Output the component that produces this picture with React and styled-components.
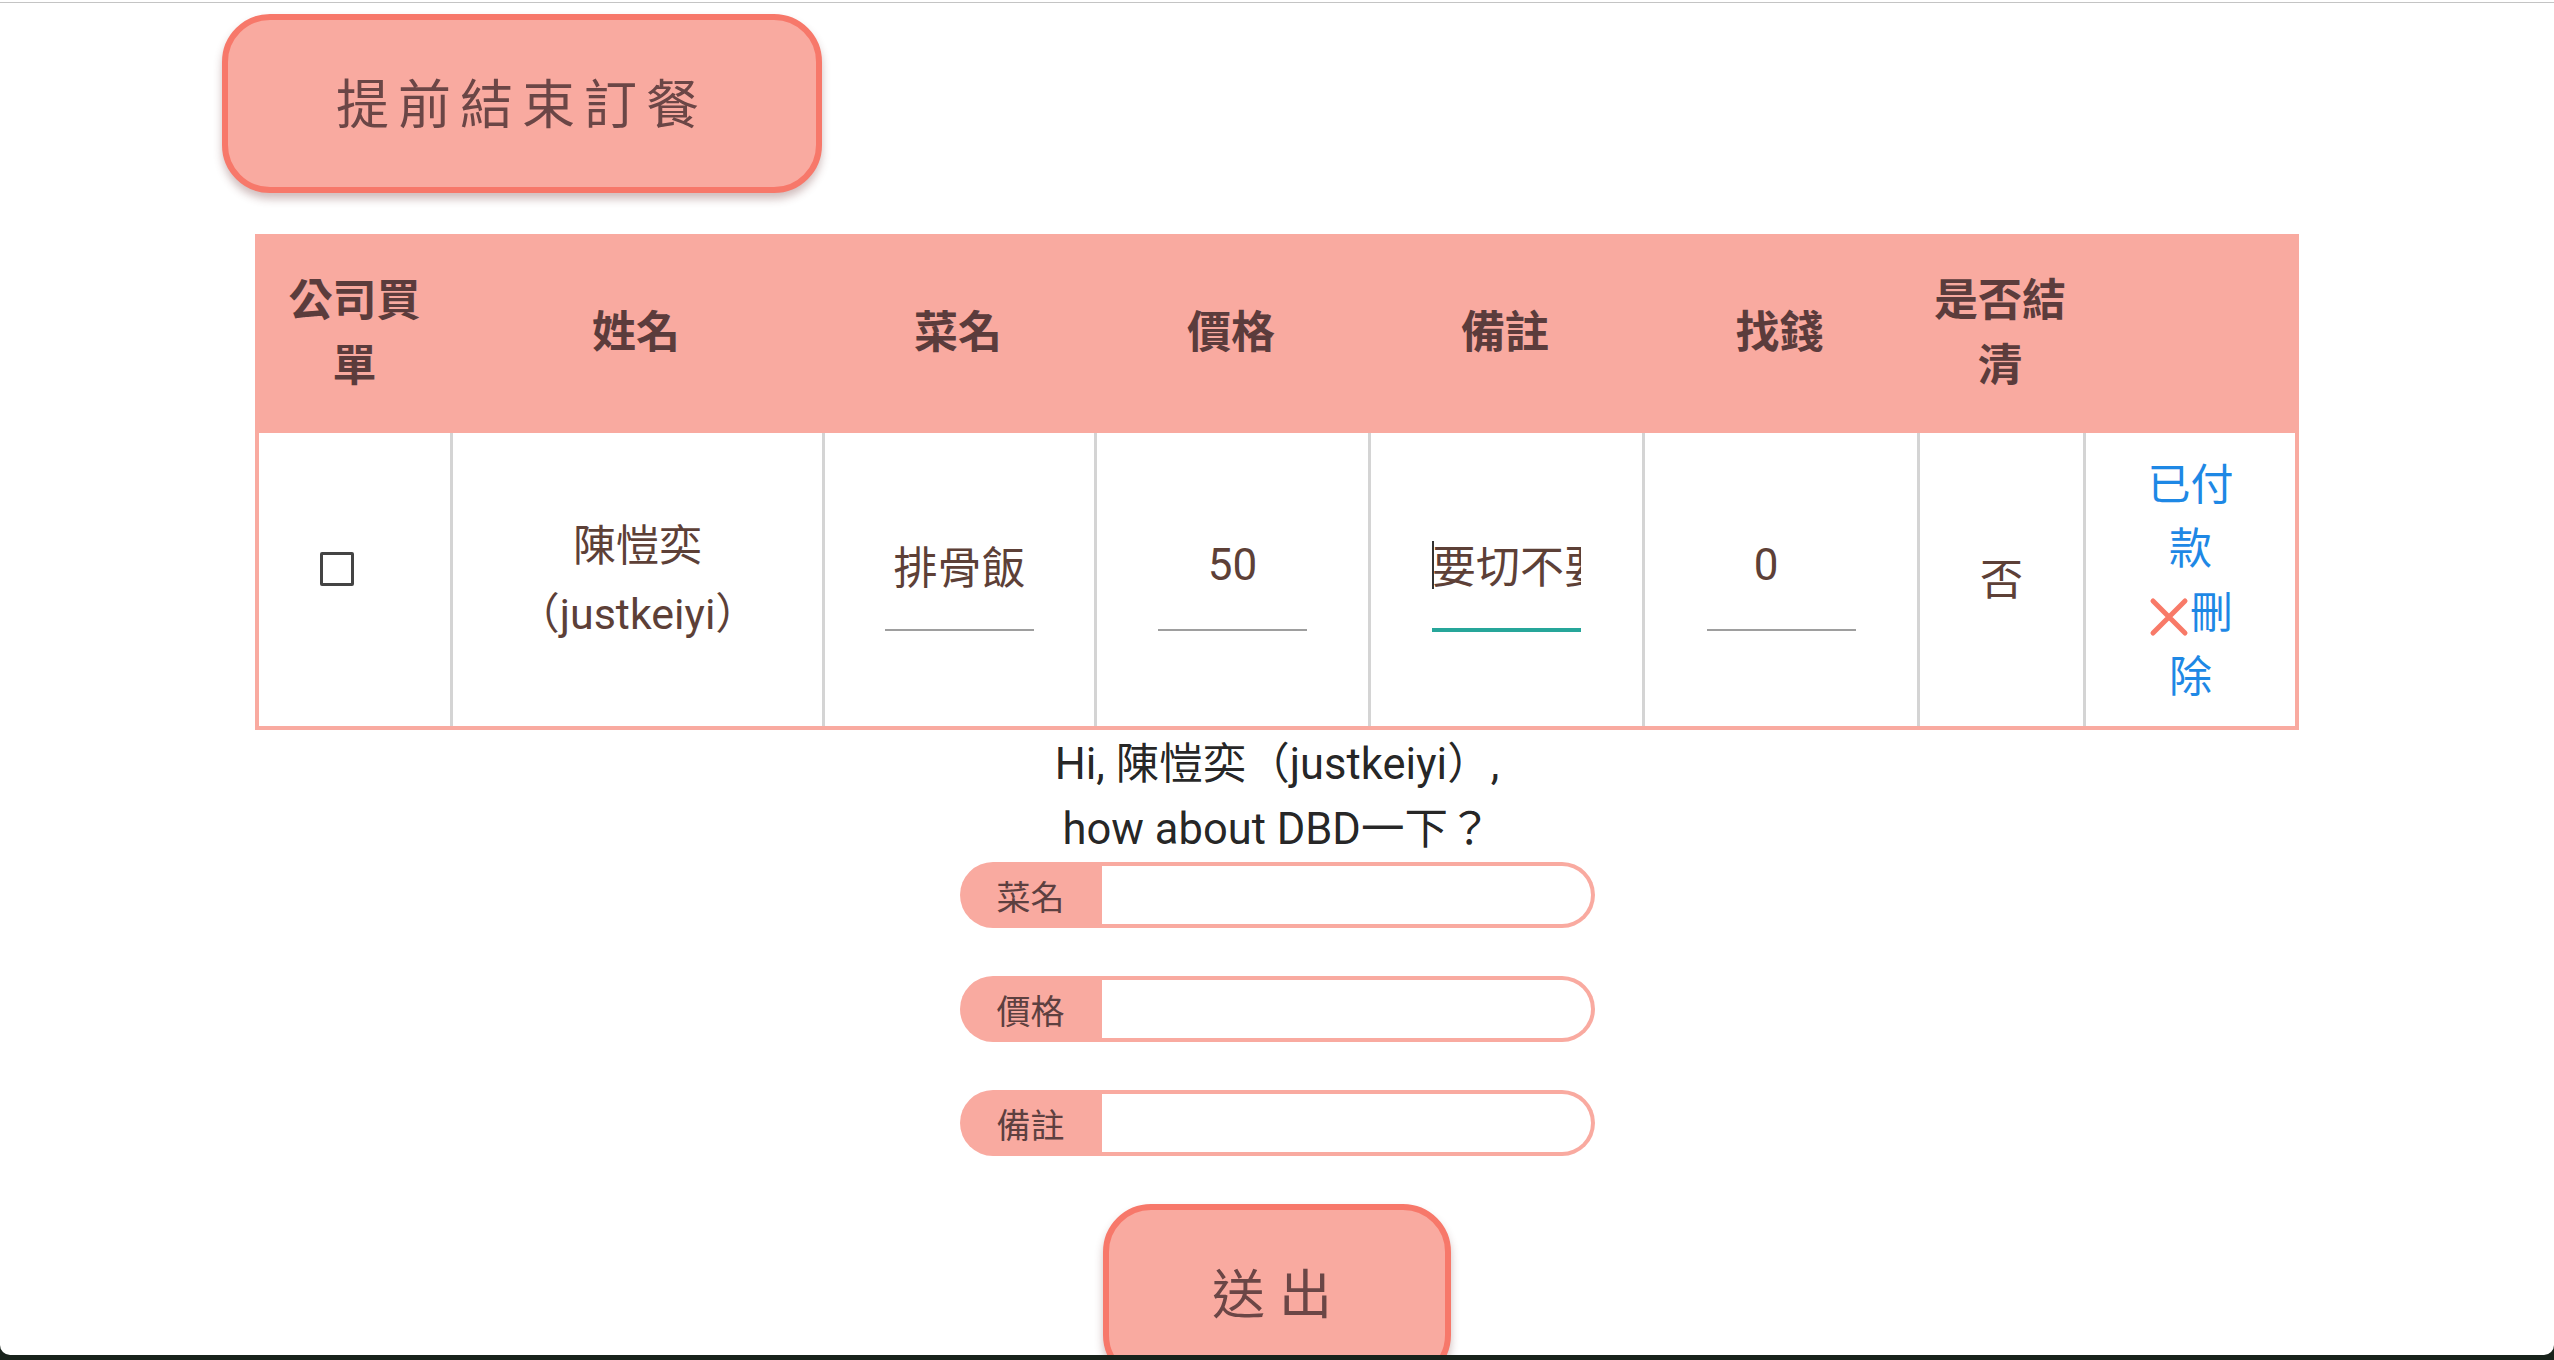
import React from 'react';
import styled, { createGlobalStyle } from 'styled-components';

const Global = createGlobalStyle`
  html, body { margin: 0; padding: 0; }
  body {
    background: #18221b;
    font-family: Roboto, "Noto Sans CJK TC", sans-serif;
  }
  * { box-sizing: border-box; }
`;

const PINK = '#f9aaa0';
const CORAL = '#f7786a';

const Frame = styled.div`
  width: 2554px;
  height: 1355px;
  background: #fff;
  overflow: hidden;
  border-radius: 0 0 10px 10px;
  display: flex;
  flex-direction: column;
`;

const TopRule = styled.div`
  flex-shrink: 0;
  height: 1px;
  margin-top: 2px;
  background: #c4c4c4;
`;

const TopBar = styled.div`
  display: flex;
  padding: 11px 0 0 222px;
`;

const PillButton = styled.button`
  flex-shrink: 0;
  width: ${(p) => p.$w}px;
  height: 179px;
  border: 6px solid ${CORAL};
  border-radius: 48px;
  background: ${PINK};
  color: #6b4646;
  font-family: "Noto Sans CJK TC", sans-serif;
  font-size: 53px;
  font-weight: 400;
  letter-spacing: ${(p) => p.$ls}px;
  padding: 0 0 6px ${(p) => p.$pl}px;
  box-shadow: 0 6px 8px rgba(110, 50, 50, 0.32);
  cursor: pointer;
`;

const Table = styled.div`
  width: 2044px;
  margin: 41px auto 0;
  border: 4px solid ${PINK};
  display: grid;
  grid-template-columns: 191px 372px 272px 274px 274px 275px 166px 212px;
  grid-template-rows: 195px 293px;
`;

const HeadCell = styled.div`
  background: ${PINK};
  display: flex;
  align-items: center;
  justify-content: center;
  text-align: center;
  padding-bottom: 12px;
  font-family: "Noto Sans CJK TC", sans-serif;
  font-weight: 700;
  font-size: 44px;
  line-height: 65px;
  color: #5b3c3c;
`;

const BodyCell = styled.div`
  display: flex;
  align-items: center;
  justify-content: center;
  text-align: center;
  border-left: ${(p) => (p.$first ? 'none' : '3px solid #d4d4d4')};
  font-size: 43px;
  line-height: 68px;
  color: #5d4037;
`;

const CheckBox = styled.span`
  display: block;
  width: 34px;
  height: 34px;
  border: 3px solid #444;
  border-radius: 2px;
  margin: 0 36px 22px 0;
`;

const FieldWrap = styled.div`
  position: relative;
  margin-top: 4px;
`;

const UnderInput = styled.input`
  display: block;
  box-sizing: content-box;
  width: ${(p) => 149 - (p.$spin || 0)}px;
  height: 64px;
  padding: 0 ${(p) => p.$spin || 0}px 32px 0;
  margin: 0;
  border: none;
  border-bottom: ${(p) => (p.$focused ? '4px solid #26a69a' : '2px solid #9e9e9e')};
  background: transparent;
  outline: none;
  text-align: ${(p) => (p.$focused ? 'left' : 'center')};
  font-family: Roboto, "Noto Sans CJK TC", sans-serif;
  font-size: 44px;
  color: #5d4037;
`;

const Caret = styled.span`
  position: absolute;
  left: 0;
  top: 9px;
  width: 2px;
  height: 48px;
  background: #333;
`;

const Actions = styled.div`
  width: 104px;
  margin-top: -6px;
  text-align: center;
  font-family: "Noto Sans CJK TC", sans-serif;
  font-size: 43px;
  line-height: 64px;
  color: #1e88e5;
`;

const ActionLink = styled.a`
  display: block;
  color: inherit;
  text-decoration: none;
  cursor: pointer;
`;

const XMark = styled.svg`
  width: 42px;
  height: 42px;
  vertical-align: -10px;
`;

const Greeting = styled.div`
  margin-top: 2px;
  text-align: center;
  font-size: 43.5px;
  line-height: 65px;
  color: rgba(0, 0, 0, 0.87);
`;

const Form = styled.form`
  display: flex;
  flex-direction: column;
  align-items: center;
  gap: 48px;
`;

const FormRow = styled.div`
  display: flex;
  width: 635px;
  height: 66px;
`;

const FormLabel = styled.label`
  flex-shrink: 0;
  width: 142px;
  display: flex;
  align-items: center;
  justify-content: center;
  background: ${PINK};
  border-radius: 33px 0 0 33px;
  font-family: "Noto Sans CJK TC", sans-serif;
  font-size: 34px;
  color: #5d4040;
`;

const FormInput = styled.input`
  flex: 1;
  min-width: 0;
  height: 66px;
  margin: 0;
  padding: 0 24px;
  border: 4px solid ${PINK};
  border-left: none;
  border-radius: 0 33px 33px 0;
  background: #fff;
  outline: none;
  font-size: 34px;
`;

const SubmitRow = styled.div`
  display: flex;
  justify-content: center;
  margin-top: 48px;
`;

const headers = [
  <>公司買<br />單</>,
  '姓名',
  '菜名',
  '價格',
  '備註',
  '找錢',
  <>是否結<br />清</>,
  '',
];

export default function App() {
  return (
    <>
      <Global />
      <Frame>
        <TopRule />
        <TopBar>
          <PillButton $w={600} $ls={9} $pl={0}>提前結束訂餐</PillButton>
        </TopBar>

        <Table>
          {headers.map((h, i) => (
            <HeadCell key={i}>{h}</HeadCell>
          ))}

          <BodyCell $first>
            <CheckBox />
          </BodyCell>
          <BodyCell>
            <span>陳愷奕<br />（justkeiyi）</span>
          </BodyCell>
          <BodyCell>
            <FieldWrap>
              <UnderInput readOnly value="排骨飯" />
            </FieldWrap>
          </BodyCell>
          <BodyCell>
            <FieldWrap>
              <UnderInput readOnly value="50" />
            </FieldWrap>
          </BodyCell>
          <BodyCell>
            <FieldWrap>
              <UnderInput readOnly $focused value="要切不要辣" />
              <Caret />
            </FieldWrap>
          </BodyCell>
          <BodyCell>
            <FieldWrap>
              <UnderInput readOnly $spin={30} value="0" />
            </FieldWrap>
          </BodyCell>
          <BodyCell>否</BodyCell>
          <BodyCell>
            <Actions>
              <ActionLink>已付款</ActionLink>
              <ActionLink>
                <XMark viewBox="0 0 42 42">
                  <path
                    d="M5 5 L37 37 M37 5 L5 37"
                    stroke="#f87a68"
                    strokeWidth="5"
                    strokeLinecap="round"
                    fill="none"
                  />
                </XMark>
                刪除
              </ActionLink>
            </Actions>
          </BodyCell>
        </Table>

        <Greeting>
          Hi, 陳愷奕（justkeiyi）,
          <br />
          how about DBD一下？
        </Greeting>

        <Form onSubmit={(e) => e.preventDefault()}>
          <FormRow>
            <FormLabel>菜名</FormLabel>
            <FormInput />
          </FormRow>
          <FormRow>
            <FormLabel>價格</FormLabel>
            <FormInput />
          </FormRow>
          <FormRow>
            <FormLabel>備註</FormLabel>
            <FormInput />
          </FormRow>
        </Form>

        <SubmitRow>
          <PillButton $w={348} $ls={14} $pl={4}>送出</PillButton>
        </SubmitRow>
      </Frame>
    </>
  );
}
